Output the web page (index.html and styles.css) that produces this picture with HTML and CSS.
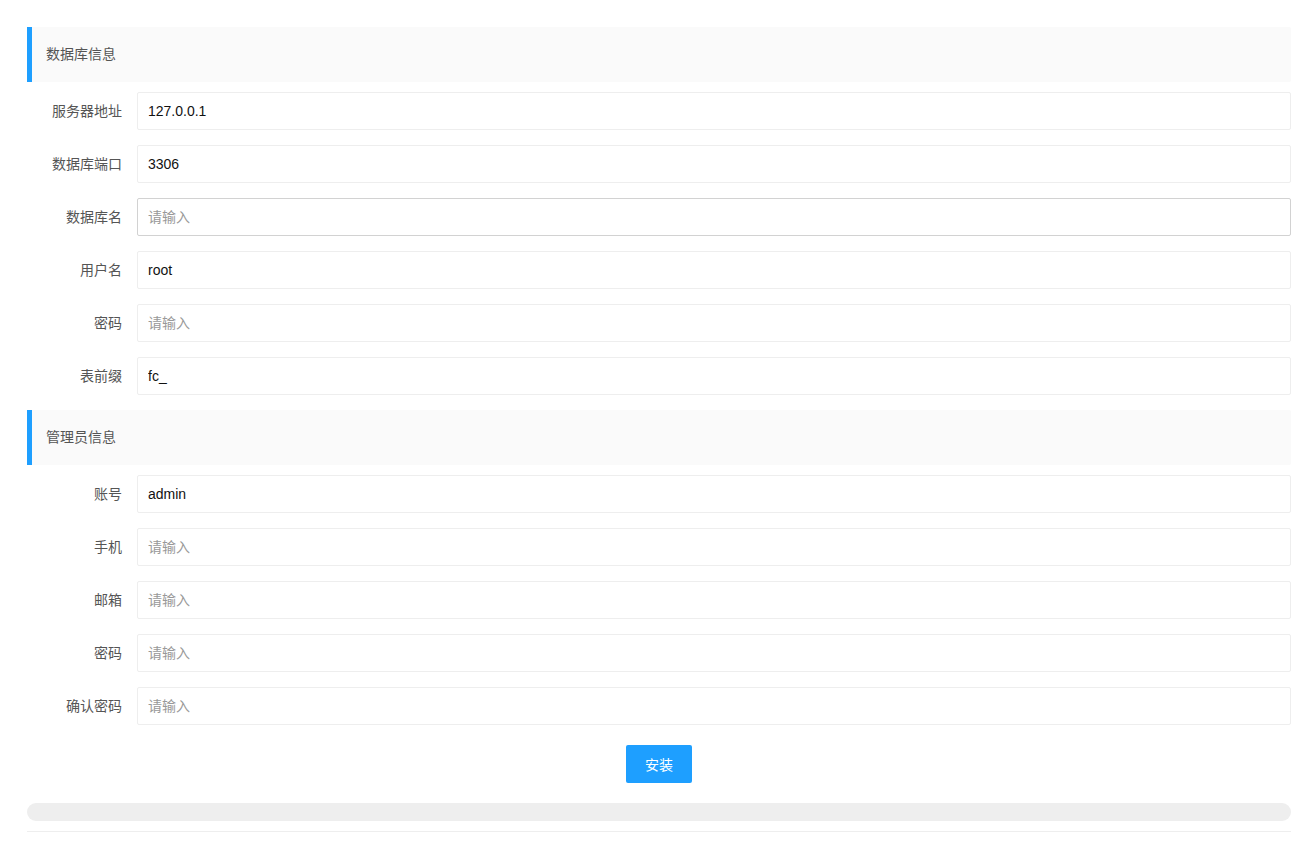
FILE: index.html
```html
<!DOCTYPE html>
<html lang="zh-CN">
<head>
    <meta charset="UTF-8">
    <meta name="viewport" content="width=device-width, initial-scale=1.0">
    <title>安装</title>
    <link rel="stylesheet" href="styles.css">
</head>
<body>
    <form class="install-form">
        <blockquote class="quote">数据库信息</blockquote>
        <div class="form-item">
            <label class="form-label">服务器地址</label>
            <div class="input-block"><input class="input" type="text" value="127.0.0.1" placeholder="请输入"></div>
        </div>
        <div class="form-item">
            <label class="form-label">数据库端口</label>
            <div class="input-block"><input class="input" type="text" value="3306" placeholder="请输入"></div>
        </div>
        <div class="form-item">
            <label class="form-label">数据库名</label>
            <div class="input-block"><input class="input input-hover" type="text" placeholder="请输入"></div>
        </div>
        <div class="form-item">
            <label class="form-label">用户名</label>
            <div class="input-block"><input class="input" type="text" value="root" placeholder="请输入"></div>
        </div>
        <div class="form-item">
            <label class="form-label">密码</label>
            <div class="input-block"><input class="input" type="text" placeholder="请输入"></div>
        </div>
        <div class="form-item">
            <label class="form-label">表前缀</label>
            <div class="input-block"><input class="input" type="text" value="fc_" placeholder="请输入"></div>
        </div>

        <blockquote class="quote">管理员信息</blockquote>
        <div class="form-item">
            <label class="form-label">账号</label>
            <div class="input-block"><input class="input" type="text" value="admin" placeholder="请输入"></div>
        </div>
        <div class="form-item">
            <label class="form-label">手机</label>
            <div class="input-block"><input class="input" type="text" placeholder="请输入"></div>
        </div>
        <div class="form-item">
            <label class="form-label">邮箱</label>
            <div class="input-block"><input class="input" type="text" placeholder="请输入"></div>
        </div>
        <div class="form-item">
            <label class="form-label">密码</label>
            <div class="input-block"><input class="input" type="text" placeholder="请输入"></div>
        </div>
        <div class="form-item">
            <label class="form-label">确认密码</label>
            <div class="input-block"><input class="input" type="text" placeholder="请输入"></div>
        </div>

        <div class="form-actions">
            <button class="btn" type="button">安装</button>
        </div>

        <div class="progress"><div class="progress-bar"></div></div>
        <hr class="divider">
    </form>
</body>
</html>
```

FILE: styles.css
```css
body {
    margin: 0;
    padding: 27px 14px 0 27px;
    font-family: "Liberation Sans", "Noto Sans CJK SC", sans-serif;
    font-size: 14px;
    color: #333;
    background-color: #fff;
}
.quote {
    margin: 0 0 10px;
    padding: 15px 15px 15px 14px;
    line-height: 25px;
    border-left: 5px solid #1E9FFF;
    border-radius: 0 2px 2px 0;
    background-color: #FAFAFA;
    font-size: 14px;
    color: #555;
}
.form-item {
    display: flex;
    margin-bottom: 15px;
}
.form-label {
    width: 80px;
    padding: 9px 15px;
    line-height: 20px;
    text-align: right;
    color: #555;
    flex-shrink: 0;
}
.input-block {
    flex: 1;
}
.input {
    display: block;
    box-sizing: border-box;
    width: 100%;
    height: 38px;
    margin: 0;
    padding: 0 10px;
    border: 1px solid #eee;
    border-radius: 2px;
    background-color: #fff;
    font-family: inherit;
    font-size: 14px;
    color: #111;
    outline: none;
}
.input::placeholder {
    color: #999;
}
.input-hover,
.input:hover {
    border-color: #d2d2d2;
}
.form-actions {
    padding-top: 5px;
    margin-bottom: 20px;
    text-align: center;
}
.btn {
    height: 38px;
    padding: 0 18px;
    border: 1px solid transparent;
    border-radius: 2px;
    background-color: #1E9FFF;
    color: #fff;
    font-family: inherit;
    font-size: 14px;
    cursor: pointer;
}
.progress {
    height: 18px;
    border-radius: 20px;
    background-color: #eee;
    overflow: hidden;
}
.progress-bar {
    width: 0;
    height: 100%;
    background-color: #1E9FFF;
}
.divider {
    margin: 10px 0;
    height: 1px;
    border: 0;
    background-color: #eee;
}
```
